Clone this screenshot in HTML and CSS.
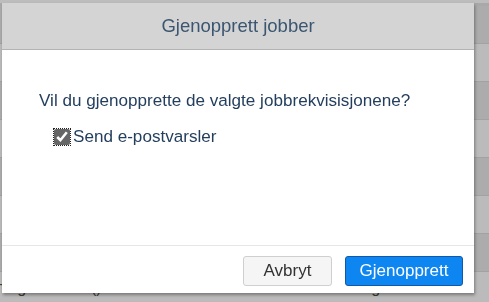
FILE: index.html
```html
<!DOCTYPE html>
<html lang="nb">
<head>
  <meta charset="UTF-8" />
  <meta name="viewport" content="width=device-width, initial-scale=1.0" />
  <title>Gjenopprett jobber</title>
  <link rel="stylesheet" href="styles.css">
</head>
<body>
  <div class="backdrop">
    <div class="row"></div>
    <div class="row alt"></div>
    <div class="row"></div>
    <div class="row alt"></div>
    <div class="row"></div>
    <div class="row alt"></div>
    <div class="row"></div>
    <div class="row alt last">
      <span class="cell c1">ning</span>
      <span class="cell c2">()</span>
      <span class="cell c3">Mathilda Godborg</span>
    </div>
  </div>

  <div class="modal">
    <div class="modal-header">Gjenopprett jobber</div>
    <div class="modal-body">
      <p class="question">Vil du gjenopprette de valgte jobbrekvisisjonene?</p>
      <label class="check">
        <input type="checkbox" checked />
        <span>Send e-postvarsler</span>
      </label>
    </div>
    <div class="modal-footer">
      <button class="btn">Avbryt</button>
      <button class="btn primary">Gjenopprett</button>
    </div>
  </div>
</body>
</html>
```

FILE: styles.css
```css
* {
  box-sizing: border-box;
}
html, body {
  height: 100%;
}
body {
  margin: 0;
  font-family: 'Liberation Sans', Arial, sans-serif;
  background: #a9a9a9;
  overflow: hidden;
}
.backdrop {
  display: flex;
  flex-direction: column;
  padding-top: 3px;
  border-top: 3px solid #bdbdbd;
}
.row {
  height: 38px;
  background: #acacac;
  border-bottom: 1px solid #a2a2a2;
  display: flex;
  align-items: flex-start;
}
.row.alt {
  background: #bbbbbb;
}
.row.last {
  padding-top: 7px;
  font-size: 16px;
  color: #3c3c3c;
}
.cell.c1 {
  width: 95px;
  margin-left: -4px;
}
.cell.c2 {
  width: 162px;
}
.modal {
  position: fixed;
  left: 2px;
  top: 3px;
  width: 472px;
  height: 290px;
  background: #fff;
  display: flex;
  flex-direction: column;
  box-shadow: 1px 2px 3px rgba(0, 0, 0, 0.35);
}
.modal-header {
  height: 47px;
  background: #d4d4d4;
  border-bottom: 1px solid #b3b3b3;
  display: flex;
  align-items: center;
  justify-content: center;
  font-size: 18.5px;
  color: #3b5670;
}
.modal-body {
  flex: 1;
  padding: 40px 36px 0 37px;
  color: #243f5e;
  font-size: 17.1px;
}
.question {
  margin: 0;
  line-height: 22px;
}
.check {
  display: flex;
  align-items: center;
  margin-top: 14px;
  margin-left: 14px;
  line-height: 22px;
}
.check input {
  margin: 0 3px 0 1px;
  width: 16px;
  height: 16px;
  accent-color: #666;
  outline: 1px dotted #222;
  outline-offset: 0;
}
.modal-footer {
  height: 48px;
  border-top: 1px solid #e6e6e6;
  display: flex;
  justify-content: flex-end;
  align-items: flex-start;
  gap: 13px;
  padding: 10px 11px 0 0;
}
.btn {
  height: 30px;
  font-family: inherit;
  font-size: 17px;
  border-radius: 3px;
  border: 1px solid #cfcfcf;
  background: #f5f5f5;
  color: #333;
  padding: 0;
  width: 89px;
}
.btn.primary {
  width: 118px;
  background: #0d86f2;
  border-color: #1357a8;
  color: #fff;
}
```
